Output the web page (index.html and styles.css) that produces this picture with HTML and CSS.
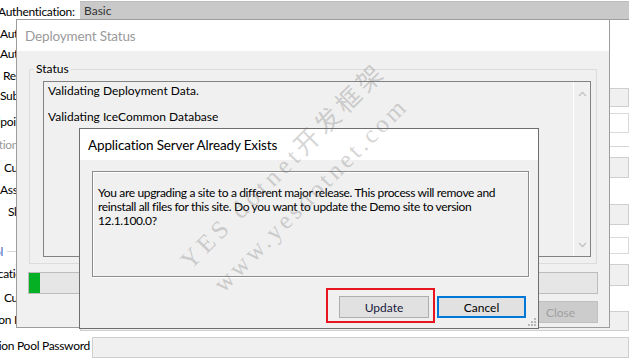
FILE: index.html
```html
<!DOCTYPE html>
<html lang="en">
<head>
  <meta charset="UTF-8">
  <title>Deployment Status</title>
  <link rel="stylesheet" href="styles.css">
</head>
<body>
  <!-- site settings form behind the dialogs -->
  <div class="site-form">
    <div class="label-col">
      <label class="lbl lbl-auth">Authentication:</label>
      <label class="lbl">Authentication User</label>
      <label class="lbl">Authentication Password</label>
      <label class="lbl in-3">Request Timeout</label>
      <label class="lbl">Subdomain</label>
      <label class="lbl out-endpoint">Endpoint Binding</label>
      <label class="lbl muted out-tion">Application Mode</label>
      <label class="lbl in-4">Custom Port</label>
      <label class="lbl">Assembly Path</label>
      <label class="lbl in-8">Slot Name</label>
      <div class="group-head"><span class="out-pool">Pool</span><span class="group-line"></span></div>
      <label class="lbl out-cat">Application Identity</label>
      <label class="lbl in-4">Custom User</label>
      <label class="lbl out-oni">Application Identity</label>
      <label class="lbl out-ion">Application Pool Password</label>
    </div>
    <div class="field-col">
      <div class="field field-basic">Basic</div>
      <div class="field f-a"></div>
      <div class="field f-b white"></div>
      <div class="rule f-c"></div>
      <div class="field f-d"></div>
      <div class="field f-e"></div>
      <div class="field f-f white"></div>
      <div class="field f-g"></div>
      <div class="field f-h"></div>
      <div class="field f-pass"></div>
    </div>
  </div>

  <!-- Deployment Status window -->
  <div class="deploy-window">
    <div class="win-title inactive">Deployment Status</div>
    <div class="win-body">
      <fieldset class="status-group">
        <legend>Status</legend>
        <div class="status-list">
          <div class="list-items">
            <p>Validating Deployment Data.</p>
            <p>Validating IceCommon Database</p>
          </div>
          <div class="scrollbar">
            <svg width="9" height="6" viewBox="0 0 9 6"><path d="M1 5 L4.5 1.5 L8 5" fill="none" stroke="#c2c2c2" stroke-width="1.3"/></svg>
            <svg width="9" height="6" viewBox="0 0 9 6"><path d="M1 1 L4.5 4.5 L8 1" fill="none" stroke="#c2c2c2" stroke-width="1.3"/></svg>
          </div>
        </div>
      </fieldset>
      <div class="progress"><div class="progress-fill" style="width: 11px"></div></div>
      <button class="btn btn-close" disabled>Close</button>
    </div>
  </div>

  <!-- confirmation dialog -->
  <div class="confirm-window">
    <div class="win-title">Application Server Already Exists</div>
    <div class="confirm-body">
      <div class="message-panel">
        <p>You are upgrading a site to a different major release. This process will remove and<br>reinstall all files for this site. Do you want to update the Demo site to version<br>12.1.100.0?</p>
      </div>
      <div class="confirm-actions">
        <button class="btn btn-update">Update</button>
        <button class="btn btn-cancel">Cancel</button>
      </div>
    </div>
    <span class="mark-box"></span>
    <svg class="grip" width="10" height="10" viewBox="0 0 10 10">
      <rect x="7" y="1" width="2" height="2" fill="#b8b8b8"/>
      <rect x="4" y="4" width="2" height="2" fill="#b8b8b8"/>
      <rect x="7" y="4" width="2" height="2" fill="#b8b8b8"/>
      <rect x="1" y="7" width="2" height="2" fill="#b8b8b8"/>
      <rect x="4" y="7" width="2" height="2" fill="#b8b8b8"/>
      <rect x="7" y="7" width="2" height="2" fill="#b8b8b8"/>
    </svg>
  </div>

  <div class="watermark">
    <span class="wm-line wm-one">YES dotnet开发框架</span>
    <span class="wm-line wm-two">www.yesdotnet.com</span>
  </div>
</body>
</html>
```

FILE: styles.css
```css
/* ===== Base ===== */
* {
  box-sizing: border-box;
  margin: 0;
  padding: 0;
}

body {
  position: relative;
  width: 629px;
  height: 362px;
  overflow: hidden;
  background: #fff;
  color: #000;
  font-family: Lato, "Noto Sans", sans-serif;
  font-size: 12px;
}

/* ===== Background form ===== */
.site-form {
  display: flex;
  height: 100%;
}

.label-col {
  flex: 0 0 80px;
  min-width: 0;
  display: grid;
  grid-template-columns: 80px;
  grid-template-rows: 22px 20px 22px 20px 26px 23px 23px 22px 22px 39px 23px 24px 22px 26px 16px;
  padding-top: 4px;
  white-space: nowrap;
  letter-spacing: -0.3px;
}

.lbl {
  line-height: 16px;
}

.lbl-auth {
  margin-left: -2px;
}

.muted {
  color: #9a9a9a;
}

.in-3 { margin-left: 3px; }
.in-4 { margin-left: 4px; }
.in-8 { margin-left: 8px; }
.out-endpoint { margin-left: -19px; }
.out-tion { margin-left: -38px; }
.out-pool { margin-left: -19px; }
.out-cat { margin-left: -28px; }
.out-oni { margin-left: -45px; }
.out-ion { margin-left: -42px; }

.group-head {
  display: flex;
  align-items: center;
  height: 16px;
  color: #4a5bc4;
}

.group-line {
  flex: 1;
  margin-left: 4px;
  border-top: 1px solid #d8d8d8;
}

.field-col {
  flex: 1;
  display: flex;
  flex-direction: column;
}

.field {
  border: 1px solid #cfcfcf;
  background: #f0f0f0;
}

.field.white {
  border-color: #dadada;
  background: #fff;
}

.rule {
  border-top: 1px solid #d6d6d6;
}

.field-basic {
  height: 19px;
  margin-top: 1px;
  padding: 1px 4px;
  border: none;
  border-top: 1px solid #bdbdbd;
  border-bottom: 1px solid #9f9f9f;
  background: #c9c9c9;
  color: #333;
  line-height: 16px;
}

.f-a { margin-top: 68px; height: 19px; }
.f-b { margin-top: 6px; height: 20px; }
.f-c { margin-top: 13px; }
.f-d { margin-top: 10px; height: 21px; }
.f-e { margin-top: 26px; height: 21px; }
.f-f { margin-top: 12px; height: 17px; }
.f-g { margin-top: 10px; height: 22px; }
.f-h { margin-top: 25px; height: 20px; }
.f-pass { margin: 6px 0 0 12px; height: 21px; }

/* ===== Windows ===== */
.win-title {
  display: flex;
  align-items: center;
  height: 31px;
  padding-left: 8px;
  background: #fff;
  font-size: 13.5px;
  letter-spacing: -0.15px;
}

.win-title.inactive {
  color: #9a9a9a;
}

.deploy-window {
  position: absolute;
  left: 16px;
  top: 19px;
  width: 594px;
  height: 309px;
  display: flex;
  flex-direction: column;
  border: 1px solid #9c9c9c;
  background: #f0f0f0;
}

.win-body {
  flex: 1;
  display: flex;
  flex-direction: column;
  padding: 10px 11px 0 11px;
}

.status-group {
  width: 568px;
  margin-left: 1px;
  padding: 0 0 6px 0;
  border: 1px solid #dcdcdc;
}

.status-group legend {
  margin-left: 4px;
  padding: 0 2px;
  line-height: 16px;
}

.status-list {
  display: flex;
  width: 548px;
  height: 176px;
  margin: 4px 0 0 13px;
  border: 1px solid #828282;
  background: #f0f0f0;
}

.list-items {
  flex: 1;
  padding: 2px 4px;
}

.list-items p {
  line-height: 13px;
  margin-bottom: 13px;
}

.scrollbar {
  display: flex;
  flex-direction: column;
  justify-content: space-between;
  align-items: center;
  width: 17px;
  padding: 9px 0 8px;
  border-left: 1px solid #fff;
}

.progress {
  width: 570px;
  height: 22px;
  margin-top: 8px;
  border: 1px solid #bcbcbc;
  background: #e6e6e6;
}

.progress-fill {
  height: 100%;
  background: #06b025;
}

.btn {
  height: 22px;
  border: 1px solid #adadad;
  background: #e1e1e1;
  color: #000;
  font-family: inherit;
  font-size: 12px;
}

.btn-close {
  align-self: flex-end;
  width: 75px;
  margin-top: 7px;
  border-color: #bfbfbf;
  background: #cccccc;
  color: #a0a0a0;
}

/* ===== Confirm dialog ===== */
.confirm-window {
  position: absolute;
  left: 79px;
  top: 128px;
  width: 460px;
  height: 201px;
  display: flex;
  flex-direction: column;
  border: 1px solid #6e6e6e;
  background: #f0f0f0;
}

.confirm-body {
  flex: 1;
  padding: 11px 9px 0 12px;
}

.message-panel {
  height: 106px;
  padding: 14px 5px;
  border: 1px solid #8c8c8c;
  box-shadow: inset 1px 1px 0 #fff, 1px 1px 0 #fff;
}

.message-panel p {
  line-height: 14px;
  white-space: nowrap;
  letter-spacing: -0.35px;
}

.confirm-actions {
  display: flex;
  justify-content: flex-end;
  gap: 8px;
  margin: 19px 3px 0 0;
}

.btn-update {
  width: 90px;
  color: #1a1a40;
}

.btn-cancel {
  width: 89px;
  border: 2px solid #0078d7;
}

/* red annotation box around the Update button */
.mark-box {
  position: absolute;
  left: 246px;
  top: 159px;
  width: 109px;
  height: 35px;
  border: 2px solid #e8141f;
}

.grip {
  position: absolute;
  right: 1px;
  bottom: 1px;
}

/* ===== Watermark ===== */
.watermark {
  position: absolute;
  inset: 0;
  pointer-events: none;
}

.wm-line {
  position: absolute;
  white-space: nowrap;
  transform: rotate(-45deg);
  transform-origin: 0 100%;
  color: rgba(110, 110, 110, 0.3);
  font-family: "Liberation Serif", "Noto Sans CJK SC", serif;
  font-size: 25px;
  line-height: 26px;
}

.wm-one {
  left: 194px;
  top: 248px;
  letter-spacing: 4.5px;
}

.wm-two {
  left: 227px;
  top: 271px;
  letter-spacing: 3.5px;
}
```
